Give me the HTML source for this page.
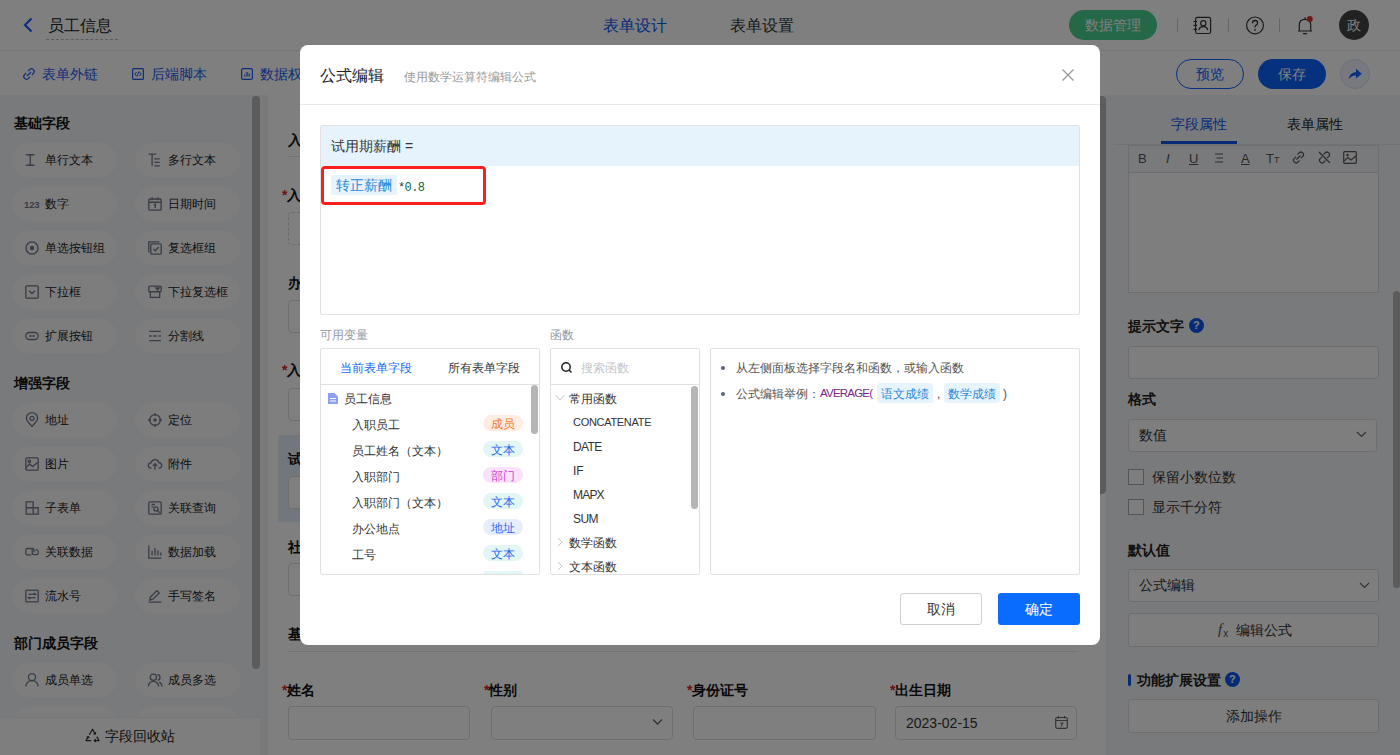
<!DOCTYPE html>
<html><head><meta charset="utf-8">
<style>
*{box-sizing:border-box;margin:0;padding:0}
html,body{width:1400px;height:755px;overflow:hidden;background:#fff;font-family:"Liberation Sans",sans-serif;color:#333;font-size:14px}
.a{position:absolute}
.t{position:absolute;white-space:nowrap;line-height:1}
svg{position:absolute;overflow:visible}
#hdr{left:0;top:0;width:1400px;height:51px;background:#fff;border-bottom:1px solid #ececec}
#tb{left:0;top:51px;width:1400px;height:44px;background:#fff}
#side{left:0;top:95px;width:268px;height:660px;background:#f3f4f7}
#canvas{left:268px;top:95px;width:838px;height:660px;background:#fff}
#right{left:1106px;top:95px;width:294px;height:660px;background:#f3f4f7}
#mask{left:0;top:0;width:1400px;height:755px;background:rgba(0,0,0,.5)}
#modal{left:300px;top:45px;width:800px;height:600px;background:#fff;border-radius:8px}
.pill{position:absolute;width:105px;height:34px;border-radius:17px;background:#fbfbfc}
.pill .t{font-size:12px;color:#222;top:11px}
.sh{position:absolute;font-size:14px;font-weight:bold;color:#111;line-height:1}
.ic{stroke:#737a8c;fill:none;stroke-width:1.15}
.sb{position:absolute;background:#b4b4b4;border-radius:4px}
</style></head><body>
<!-- header -->
<div id="hdr" class="a"></div>
<svg style="left:22px;top:17px" width="12" height="16" viewBox="0 0 12 16"><path d="M9.5 1.5 L3 8 L9.5 14.5" stroke="#1a5cf0" stroke-width="2.2" fill="none"/></svg>
<div class="t" style="left:48px;top:18px;font-size:16px;color:#222">员工信息</div>
<div class="a" style="left:46px;top:39px;width:72px;border-top:1px dashed #bbb"></div>
<div class="t" style="left:603px;top:18px;font-size:16px;color:#0a56ee">表单设计</div>
<div class="t" style="left:730px;top:18px;font-size:16px;color:#333">表单设置</div>
<div class="a" style="left:1069px;top:10px;width:88px;height:30px;border-radius:15px;background:#48d08e"></div>
<div class="t" style="left:1085px;top:18px;font-size:14px;color:#fff">数据管理</div>
<div class="a" style="left:1177px;top:18px;width:1px;height:14px;background:#ccc"></div>
<div class="a" style="left:1228px;top:18px;width:1px;height:14px;background:#ccc"></div>
<div class="a" style="left:1279px;top:18px;width:1px;height:14px;background:#ccc"></div>
<svg style="left:1193px;top:16px" width="19" height="19" viewBox="0 0 19 19"><rect x="2.6" y="1.3" width="15" height="16.2" rx="1.8" style="stroke:#333;stroke-width:1.2;fill:none"/><circle cx="10.3" cy="7.3" r="2.6" style="stroke:#333;stroke-width:1.2;fill:none"/><path d="M5.8 14.2 Q6.5 10.6 10.3 10.6 Q14.1 10.6 14.8 14.2" style="stroke:#333;stroke-width:1.2;fill:none"/><path d="M0.5 5.5H4M0.5 9.4H4M0.5 13.3H4" style="stroke:#333;stroke-width:1.2;fill:none"/></svg>
<svg style="left:1245px;top:15px" width="20" height="20" viewBox="0 0 20 20"><circle cx="10" cy="10.4" r="8.4" style="stroke:#333;stroke-width:1.2;fill:none"/><path d="M7.4 8.2 Q7.4 5.5 10 5.5 Q12.6 5.5 12.6 8 Q12.6 9.6 10.8 10.4 Q10 10.8 10 12.4" style="stroke:#333;stroke-width:1.3;fill:none"/><circle cx="10" cy="14.8" r="0.9" fill="#333"/></svg>
<svg style="left:1297px;top:16px" width="16" height="19" viewBox="0 0 16 19"><path d="M2.3 15 V9 Q2.3 3.3 8 3.3 Q13.7 3.3 13.7 9 V15 Z M1 15 H15 M6 17.6 H10 M8 1.2 V3.3" style="stroke:#333;stroke-width:1.2;fill:none;stroke-linejoin:round"/><circle cx="12.8" cy="3" r="3" fill="#e0312f"/></svg>
<div class="a" style="left:1339px;top:10px;width:30px;height:30px;border-radius:15px;background:#444"></div>
<div class="t" style="left:1347px;top:18px;font-size:14px;color:#fff">政</div>
<!-- toolbar -->
<div id="tb" class="a"></div>
<svg style="left:23px;top:68px" width="12" height="12" viewBox="0 0 12 12"><path d="M5 3.2 L6.8 1.4 Q8.6 -0.2 10.4 1.6 Q12.2 3.4 10.6 5.2 L8.8 7 M7 8.8 L5.2 10.6 Q3.4 12.2 1.6 10.4 Q-0.2 8.6 1.4 6.8 L3.2 5 M4 8 L8 4" style="stroke:#1a5cf0;stroke-width:1.2;fill:none"/></svg>
<div class="t" style="left:42px;top:67px;font-size:14px;color:#1a5cf0">表单外链</div>
<svg style="left:132px;top:68px" width="12" height="12" viewBox="0 0 12 12"><rect x="0.6" y="0.6" width="10.8" height="10.8" rx="1" style="stroke:#1a5cf0;stroke-width:1.2;fill:none"/><path d="M4.5 4 L2.8 6 L4.5 8 M7.5 4 L9.2 6 L7.5 8 M6.8 3.5 L5.2 8.5" style="stroke:#1a5cf0;stroke-width:1;fill:none"/></svg>
<div class="t" style="left:151px;top:67px;font-size:14px;color:#1a5cf0">后端脚本</div>
<svg style="left:241px;top:68px" width="12" height="12" viewBox="0 0 12 12"><rect x="0.6" y="0.6" width="10.8" height="10.8" rx="1.5" style="stroke:#1a5cf0;stroke-width:1.2;fill:none"/><path d="M3.8 8.5 V6.5 M6 8.5 V4 M8.2 8.5 V5.5" style="stroke:#1a5cf0;stroke-width:1.2;fill:none"/></svg>
<div class="t" style="left:260px;top:67px;font-size:14px;color:#1a5cf0">数据权限</div>
<div class="a" style="left:1176px;top:59px;width:68px;height:30px;border-radius:15px;border:1px solid #0a62ff;background:#fff"></div>
<div class="t" style="left:1196px;top:67px;font-size:14px;color:#0a62ff">预览</div>
<div class="a" style="left:1258px;top:59px;width:68px;height:30px;border-radius:15px;background:#0a62ff"></div>
<div class="t" style="left:1278px;top:67px;font-size:14px;color:#fff">保存</div>
<div class="a" style="left:1340px;top:59px;width:30px;height:30px;border-radius:15px;border:1px solid #d6e0f8;background:#eef3fe"></div>
<svg style="left:1347px;top:67px" width="16" height="14" viewBox="0 0 16 14"><path d="M1.5 12.5 Q2.5 5.5 9 5 V1.8 L14.8 6.8 L9 11.6 V8.5 Q4.5 8.3 1.5 12.5 Z" fill="#0a62ff"/></svg>
<!-- sidebar -->
<div id="side" class="a"></div>
<div class="sh" style="left:14px;top:116px">基础字段</div>
<div class="sh" style="left:14px;top:376px">增强字段</div>
<div class="sh" style="left:14px;top:636px">部门成员字段</div>
<div class="pill" style="left:12px;top:143px"><div class="t" style="left:33px">单行文本</div></div>
<svg style="left:25px;top:153px" width="14" height="14" viewBox="0 0 12 12" class="ic"><path d="M1 1.5H8M1 10.5H8M4.5 1.5V10.5"/></svg>
<div class="pill" style="left:135px;top:143px"><div class="t" style="left:33px">多行文本</div></div>
<svg style="left:148px;top:153px" width="14" height="14" viewBox="0 0 12 12" class="ic"><path d="M0.5 1H7M3.5 1V11M5.5 5H10M5.5 8H10M5.5 11H10"/></svg>
<div class="pill" style="left:12px;top:187px"><div class="t" style="left:33px">数字</div></div>
<div class="t" style="left:24px;top:200px;font-size:9.5px;font-weight:bold;color:#737a8c;letter-spacing:-0.1px">123</div>
<div class="pill" style="left:135px;top:187px"><div class="t" style="left:33px">日期时间</div></div>
<svg style="left:148px;top:197px" width="14" height="14" viewBox="0 0 12 12" class="ic"><rect x="0.7" y="1.7" width="10.6" height="9.6" rx="1"/><path d="M0.7 4.5H11.3M3.5 0.3V2.8M8.5 0.3V2.8M5 7L6.3 6V9.5"/></svg>
<div class="pill" style="left:12px;top:231px"><div class="t" style="left:33px">单选按钮组</div></div>
<svg style="left:25px;top:241px" width="14" height="14" viewBox="0 0 12 12" class="ic"><circle cx="6" cy="6" r="5.2"/><circle cx="6" cy="6" r="1.3" fill="#737a8c"/></svg>
<div class="pill" style="left:135px;top:231px"><div class="t" style="left:33px">复选框组</div></div>
<svg style="left:148px;top:241px" width="14" height="14" viewBox="0 0 12 12" class="ic"><path d="M0.7 9.8V0.7H9.8"/><rect x="2.4" y="2.4" width="8.9" height="8.9" rx="0.8"/><path d="M4.6 6.8L6.3 8.4L9.2 5.2"/></svg>
<div class="pill" style="left:12px;top:275px"><div class="t" style="left:33px">下拉框</div></div>
<svg style="left:25px;top:285px" width="14" height="14" viewBox="0 0 12 12" class="ic"><rect x="0.7" y="0.7" width="10.6" height="10.6" rx="1"/><path d="M3.5 5L6 7.3L8.5 5"/></svg>
<div class="pill" style="left:135px;top:275px"><div class="t" style="left:33px">下拉复选框</div></div>
<svg style="left:148px;top:285px" width="14" height="14" viewBox="0 0 12 12" class="ic"><rect x="0.7" y="1" width="10.6" height="4.8" rx="0.8"/><path d="M2 5.8V10.6H10V5.8"/><path d="M6.8 2.6H9.6L8.2 4.2Z" fill="#737a8c"/></svg>
<div class="pill" style="left:12px;top:319px"><div class="t" style="left:33px">扩展按钮</div></div>
<svg style="left:25px;top:329px" width="14" height="14" viewBox="0 0 12 12" class="ic"><rect x="0.7" y="3" width="10.6" height="6" rx="3"/><path d="M3.5 6H8.5"/></svg>
<div class="pill" style="left:135px;top:319px"><div class="t" style="left:33px">分割线</div></div>
<svg style="left:148px;top:329px" width="14" height="14" viewBox="0 0 12 12" class="ic"><path d="M1 2H11M1 10H11M1 6H3M4.5 6H7.5M9 6H11"/></svg>
<div class="pill" style="left:12px;top:403px"><div class="t" style="left:33px">地址</div></div>
<svg style="left:25px;top:413px" width="14" height="14" viewBox="0 0 12 12" class="ic"><path d="M6 11.5C3 8.5 1.2 6.5 1.2 4.5A4.8 4.8 0 0 1 10.8 4.5C10.8 6.5 9 8.5 6 11.5Z"/><circle cx="6" cy="4.6" r="1.7"/></svg>
<div class="pill" style="left:135px;top:403px"><div class="t" style="left:33px">定位</div></div>
<svg style="left:148px;top:413px" width="14" height="14" viewBox="0 0 12 12" class="ic"><circle cx="6" cy="6" r="4.6"/><circle cx="6" cy="6" r="0.9" fill="#737a8c"/><path d="M6 0V2.5M6 9.5V12M0 6H2.5M9.5 6H12"/></svg>
<div class="pill" style="left:12px;top:447px"><div class="t" style="left:33px">图片</div></div>
<svg style="left:25px;top:457px" width="14" height="14" viewBox="0 0 12 12" class="ic"><rect x="0.7" y="0.7" width="10.6" height="10.6" rx="1"/><path d="M0.9 9L4 6L6.5 8.2L11 4.5"/><circle cx="3.7" cy="3.7" r="1"/></svg>
<div class="pill" style="left:135px;top:447px"><div class="t" style="left:33px">附件</div></div>
<svg style="left:148px;top:457px" width="14" height="14" viewBox="0 0 12 12" class="ic"><path d="M3 9.5H2.5A2.3 2.3 0 0 1 2.6 4.9A3.5 3.5 0 0 1 9.4 4.9A2.3 2.3 0 0 1 9.5 9.5H9M6 11V6M4.2 7.6L6 5.8L7.8 7.6"/></svg>
<div class="pill" style="left:12px;top:491px"><div class="t" style="left:33px">子表单</div></div>
<svg style="left:25px;top:501px" width="14" height="14" viewBox="0 0 12 12" class="ic"><path d="M1 11.3V0.7H7V5.8H11.3V11.3ZM1 5.8H7V11.3"/></svg>
<div class="pill" style="left:135px;top:491px"><div class="t" style="left:33px">关联查询</div></div>
<svg style="left:148px;top:501px" width="14" height="14" viewBox="0 0 12 12" class="ic"><rect x="0.7" y="0.7" width="10.6" height="10.6" rx="1"/><path d="M3 3H6M3 5H4.5"/><circle cx="6.8" cy="6.8" r="1.8"/><path d="M8.2 8.2L10 10"/></svg>
<div class="pill" style="left:12px;top:535px"><div class="t" style="left:33px">关联数据</div></div>
<svg style="left:25px;top:545px" width="14" height="14" viewBox="0 0 12 12" class="ic"><path d="M5.5 8.5H2A1.4 1.4 0 0 1 0.7 7.1V4.4A1.4 1.4 0 0 1 2 3H6.5A1.4 1.4 0 0 1 7.8 4.4V6.2M6.2 3.5V6.8A1.4 1.4 0 0 0 7.5 8.2H10A1.4 1.4 0 0 0 11.3 6.8V5.6A1.4 1.4 0 0 0 10 4.2H9"/></svg>
<div class="pill" style="left:135px;top:535px"><div class="t" style="left:33px">数据加载</div></div>
<svg style="left:148px;top:545px" width="14" height="14" viewBox="0 0 12 12" class="ic"><path d="M0.7 0.5V11.3H11.5M3.5 9V5M6 9V2.5M8.5 9V4.5M11 9V6.5"/></svg>
<div class="pill" style="left:12px;top:579px"><div class="t" style="left:33px">流水号</div></div>
<svg style="left:25px;top:589px" width="14" height="14" viewBox="0 0 12 12" class="ic"><rect x="0.7" y="1" width="10.6" height="10" rx="1"/><path d="M3 4.6H9L7.6 3.4M9 7.4H3L4.4 8.6"/></svg>
<div class="pill" style="left:135px;top:579px"><div class="t" style="left:33px">手写签名</div></div>
<svg style="left:148px;top:589px" width="14" height="14" viewBox="0 0 12 12" class="ic"><path d="M1.5 9.5L2.2 6.8L7.6 1.4L9.6 3.4L4.2 8.8ZM0.5 11.3H11.5"/></svg>
<div class="pill" style="left:12px;top:663px"><div class="t" style="left:33px">成员单选</div></div>
<svg style="left:25px;top:673px" width="14" height="14" viewBox="0 0 12 12" class="ic"><circle cx="6" cy="3.6" r="3"/><path d="M0.8 11.5A5.2 5.2 0 0 1 11.2 11.5"/></svg>
<div class="pill" style="left:135px;top:663px"><div class="t" style="left:33px">成员多选</div></div>
<svg style="left:148px;top:673px" width="14" height="14" viewBox="0 0 12 12" class="ic"><circle cx="4.6" cy="3.6" r="2.7"/><path d="M0.3 11.5A4.3 4.3 0 0 1 9 11.5M8 1.2A2.6 2.6 0 0 1 8.3 6.3M9.6 7.8A4.3 4.3 0 0 1 12 11.5"/></svg>
<div class="pill" style="left:12px;top:707px"><div class="t" style="left:33px">部门单选</div></div>
<svg style="left:25px;top:717px" width="14" height="14" viewBox="0 0 12 12" class="ic"><rect x="4" y="0.7" width="4" height="3.5"/><path d="M6 4.2V7M2 9V7H10V9"/><rect x="0.7" y="9" width="3" height="2.5"/><rect x="8.3" y="9" width="3" height="2.5"/></svg>
<div class="pill" style="left:135px;top:707px"><div class="t" style="left:33px">部门多选</div></div>
<svg style="left:148px;top:717px" width="14" height="14" viewBox="0 0 12 12" class="ic"><rect x="4" y="0.7" width="4" height="3.5"/><path d="M6 4.2V7M2 9V7H10V9"/><rect x="0.7" y="9" width="3" height="2.5"/><rect x="8.3" y="9" width="3" height="2.5"/></svg>
<div class="sb" style="left:252px;top:96px;width:8px;height:573px;background:#b9b9b9"></div>
<div class="a" style="left:0;top:717px;width:260px;height:38px;background:#fdfdfe;border-top:1px solid #eceef2"></div>
<svg style="left:85px;top:728px" width="15" height="14" viewBox="0 0 15 14"><path d="M4.3 6.8L7.5 1.2L10.3 6.1M8.6 5.8L10.3 6.1L10.8 4.4M11.8 8.6L14 12.6H9.2M10.7 11.2L9.2 12.6L10.7 14M6.2 12.6H1L3.3 8.6M1.7 9.3L3.3 8.6L4.1 10.2" style="stroke:#333;stroke-width:1.2;fill:none;stroke-linejoin:round"/></svg>
<div class="t" style="left:105px;top:729px;font-size:14px;color:#222">字段回收站</div>
<!-- canvas -->
<div id="canvas" class="a"></div>
<div class="t" style="left:288px;top:133px;font-size:14px;font-weight:bold;color:#111">入职信息</div>
<div class="a" style="left:288px;top:156px;width:789px;height:1px;background:#e4e4e4"></div>
<div class="t" style="left:282px;top:188px;font-size:14px;font-weight:bold;color:#111"><span style="color:#e02020">*</span>入职员工</div>
<div class="a" style="left:288px;top:212px;width:182px;height:33px;border:1px dashed #d4d4d4;border-radius:4px"></div>
<div class="t" style="left:288px;top:276px;font-size:14px;font-weight:bold;color:#111">办公地点</div>
<div class="a" style="left:288px;top:300px;width:789px;height:33px;border:1px solid #dcdcdc;border-radius:4px"></div>
<div class="t" style="left:282px;top:363px;font-size:14px;font-weight:bold;color:#111"><span style="color:#e02020">*</span>入职部门</div>
<div class="a" style="left:288px;top:388px;width:182px;height:33px;border:1px solid #dcdcdc;border-radius:4px"></div>
<div class="a" style="left:278px;top:435px;width:808px;height:87px;background:#e5ecfa"></div>
<div class="t" style="left:288px;top:452px;font-size:14px;font-weight:bold;color:#111">试用期薪酬</div>
<div class="a" style="left:288px;top:476px;width:789px;height:33px;border:1px solid #dcdcdc;border-radius:4px;background:#fff"></div>
<div class="t" style="left:288px;top:540px;font-size:14px;font-weight:bold;color:#111">社保基数</div>
<div class="a" style="left:288px;top:563px;width:182px;height:33px;border:1px solid #dcdcdc;border-radius:4px"></div>
<div class="t" style="left:288px;top:627px;font-size:14px;font-weight:bold;color:#111">基本信息</div>
<div class="a" style="left:288px;top:651px;width:789px;height:1px;background:#e4e4e4"></div>
<div class="t" style="left:282px;top:683px;font-size:14px;font-weight:bold;color:#111"><span style="color:#e02020">*</span>姓名</div>
<div class="a" style="left:288px;top:706px;width:182px;height:34px;border:1px solid #dcdcdc;border-radius:4px"></div>
<div class="t" style="left:484px;top:683px;font-size:14px;font-weight:bold;color:#111"><span style="color:#e02020">*</span>性别</div>
<div class="a" style="left:491px;top:706px;width:182px;height:34px;border:1px solid #dcdcdc;border-radius:4px"></div>
<svg style="left:652px;top:718px" width="11" height="8" viewBox="0 0 11 8"><path d="M1 1.5L5.5 6L10 1.5" stroke="#666" stroke-width="1.3" fill="none"/></svg>
<div class="t" style="left:687px;top:683px;font-size:14px;font-weight:bold;color:#111"><span style="color:#e02020">*</span>身份证号</div>
<div class="a" style="left:693px;top:706px;width:183px;height:34px;border:1px solid #dcdcdc;border-radius:4px"></div>
<div class="t" style="left:890px;top:683px;font-size:14px;font-weight:bold;color:#111"><span style="color:#e02020">*</span>出生日期</div>
<div class="a" style="left:895px;top:706px;width:182px;height:34px;border:1px solid #dcdcdc;border-radius:4px"></div>
<div class="t" style="left:906px;top:716px;font-size:14px;color:#333">2023-02-15</div>
<svg style="left:1055px;top:716px" width="13" height="13" viewBox="0 0 13 13"><rect x="0.7" y="1.5" width="11.6" height="10.8" rx="1.5" stroke="#666" stroke-width="1.2" fill="none"/><path d="M0.7 4.5H12.3M3.5 0V2.5M9.5 0V2.5M5.3 7H7.8L6 10.5" stroke="#666" stroke-width="1.1" fill="none"/></svg>
<div class="sb" style="left:1100px;top:96px;width:6px;height:398px;background:#b9b9b9;border-radius:0 4px 4px 0"></div>
<!-- right panel -->
<div id="right" class="a"></div>
<div class="t" style="left:1171px;top:117px;font-size:14px;color:#0a56ee">字段属性</div>
<div class="t" style="left:1287px;top:117px;font-size:14px;color:#222">表单属性</div>
<div class="a" style="left:1114px;top:144px;width:286px;height:1px;background:#e2e4e8"></div>
<div class="a" style="left:1161px;top:141px;width:76px;height:3px;background:#0a56ee"></div>
<div class="a" style="left:1128px;top:145px;width:251px;height:148px;border:1px solid #dcdde2;background:#fdfdfe"></div>
<div class="a" style="left:1129px;top:146px;width:249px;height:27px;border-bottom:1px solid #dcdde2;background:#f3f4f7"></div>
<div class="t" style="left:1138px;top:152px;font-size:13px;color:#555">B</div>
<div class="t" style="left:1166px;top:152px;font-size:13px;color:#555;font-style:italic">I</div>
<div class="t" style="left:1189px;top:152px;font-size:13px;color:#555;text-decoration:underline">U</div>
<svg style="left:1214px;top:153px" width="10" height="10" viewBox="0 0 10 10"><path d="M1 1H9M2.5 5H9M1 9H9" stroke="#5a5a5a" stroke-width="1.1" fill="none"/></svg>
<div class="t" style="left:1241px;top:152px;font-size:13px;color:#555;text-decoration:underline">A</div>
<div class="t" style="left:1266px;top:152px;font-size:13px;color:#555">T<span style="font-size:9px">T</span></div>
<svg style="left:1292px;top:151px" width="13" height="13" viewBox="0 0 13 13"><path d="M5.5 3.5L7.3 1.7Q9 0.2 10.7 1.9Q12.4 3.6 10.9 5.3L9 7.2M7.5 9.5L5.7 11.3Q4 12.8 2.3 11.1Q0.6 9.4 2.1 7.7L4 5.8M4.5 8.5L8.5 4.5" stroke="#5a5a5a" stroke-width="1.2" fill="none"/></svg>
<svg style="left:1318px;top:151px" width="13" height="13" viewBox="0 0 13 13"><path d="M5.5 3.5L7.3 1.7Q9 0.2 10.7 1.9Q12.4 3.6 10.9 5.3L9 7.2M7.5 9.5L5.7 11.3Q4 12.8 2.3 11.1Q0.6 9.4 2.1 7.7L4 5.8M1 1L12 12" stroke="#5a5a5a" stroke-width="1.2" fill="none"/></svg>
<svg style="left:1343px;top:151px" width="14" height="13" viewBox="0 0 14 13"><rect x="0.7" y="0.7" width="12.6" height="11.6" rx="1" stroke="#5a5a5a" stroke-width="1.2" fill="none"/><path d="M1 10L5 6.5L8 9L13 5" stroke="#5a5a5a" stroke-width="1.2" fill="none"/><circle cx="4.5" cy="4" r="1.2" fill="#555"/></svg>
<div class="t" style="left:1128px;top:319px;font-size:14px;font-weight:bold;color:#222">提示文字</div>
<div class="a" style="left:1189px;top:318px;width:15px;height:15px;border-radius:8px;background:#0a56ee"></div>
<div class="t" style="left:1193px;top:320px;font-size:11px;font-weight:bold;color:#fff">?</div>
<div class="a" style="left:1128px;top:346px;width:251px;height:33px;border:1px solid #dcdde2;border-radius:3px;background:#fdfdfe"></div>
<div class="t" style="left:1128px;top:392px;font-size:14px;font-weight:bold;color:#222">格式</div>
<div class="a" style="left:1128px;top:419px;width:249px;height:33px;border:1px solid #dcdde2;border-radius:3px;background:#fdfdfe"></div>
<div class="t" style="left:1139px;top:428px;font-size:14px;color:#333">数值</div>
<svg style="left:1356px;top:431px" width="11" height="7" viewBox="0 0 11 7"><path d="M1 1L5.5 5.5L10 1" stroke="#666" stroke-width="1.2" fill="none"/></svg>
<div class="a" style="left:1128px;top:469px;width:16px;height:16px;border:1px solid #a9abb3;border-radius:0;background:#fdfdfe"></div>
<div class="t" style="left:1152px;top:470px;font-size:14px;color:#333">保留小数位数</div>
<div class="a" style="left:1128px;top:499px;width:16px;height:16px;border:1px solid #a9abb3;border-radius:0;background:#fdfdfe"></div>
<div class="t" style="left:1152px;top:500px;font-size:14px;color:#333">显示千分符</div>
<div class="t" style="left:1128px;top:543px;font-size:14px;font-weight:bold;color:#222">默认值</div>
<div class="a" style="left:1128px;top:569px;width:251px;height:33px;border:1px solid #dcdde2;border-radius:3px;background:#fdfdfe"></div>
<div class="t" style="left:1139px;top:578px;font-size:14px;color:#333">公式编辑</div>
<svg style="left:1359px;top:582px" width="11" height="7" viewBox="0 0 11 7"><path d="M1 1L5.5 5.5L10 1" stroke="#666" stroke-width="1.2" fill="none"/></svg>
<div class="a" style="left:1128px;top:613px;width:251px;height:34px;border:1px solid #dcdde2;border-radius:3px;background:#fdfdfe"></div>
<div class="t" style="left:1218px;top:622px;font-size:15px;color:#555;font-style:italic;font-family:'Liberation Serif',serif">f<span style="font-size:10px;font-style:normal;font-family:'Liberation Sans',sans-serif;position:relative;top:3px;left:1px">x</span></div>
<div class="t" style="left:1236px;top:623px;font-size:14px;color:#333">编辑公式</div>
<div class="a" style="left:1128px;top:674px;width:3px;height:12px;border-radius:1.5px;background:#0a56ee"></div>
<div class="t" style="left:1137px;top:673px;font-size:14px;font-weight:bold;color:#222">功能扩展设置</div>
<div class="a" style="left:1225px;top:672px;width:15px;height:15px;border-radius:8px;background:#0a56ee"></div>
<div class="t" style="left:1229px;top:674px;font-size:11px;font-weight:bold;color:#fff">?</div>
<div class="a" style="left:1128px;top:699px;width:251px;height:34px;border:1px solid #dcdde2;border-radius:3px;background:#fdfdfe"></div>
<div class="t" style="left:1226px;top:709px;font-size:14px;color:#333">添加操作</div>
<div class="sb" style="left:1393px;top:291px;width:7px;height:297px;background:#b9b9b9"></div>
<!-- mask -->
<div id="mask" class="a"></div>
<!-- modal -->
<div id="modal" class="a"></div>
<div class="t" style="left:320px;top:68px;font-size:16px;color:#222">公式编辑</div>
<div class="t" style="left:404px;top:71px;font-size:12px;color:#999">使用数学运算符编辑公式</div>
<svg style="left:1061px;top:68px" width="14" height="14" viewBox="0 0 14 14"><path d="M1.5 1.5L12.5 12.5M12.5 1.5L1.5 12.5" stroke="#999" stroke-width="1.3" fill="none"/></svg>
<div class="a" style="left:300px;top:104px;width:800px;height:1px;background:#e8e8e8"></div>
<div class="a" style="left:320px;top:125px;width:760px;height:190px;border:1px solid #e1e1e1;border-radius:2px"></div>
<div class="a" style="left:321px;top:126px;width:758px;height:40px;background:#e6f3fd"></div>
<div class="t" style="left:331px;top:139px;font-size:14px;color:#333">试用期薪酬 =</div>
<div class="a" style="left:321px;top:166px;width:165px;height:39px;border:3px solid #ff1e1e;border-radius:4px"></div>
<div class="a" style="left:331px;top:175px;width:66px;height:20px;background:#e8f4fd;border-radius:2px"></div>
<div class="t" style="left:336px;top:178px;font-size:14px;color:#2a88d8">转正薪酬</div>
<div class="t" style="left:398px;top:182px;font-size:12px;letter-spacing:-0.6px;color:#333;font-family:'Liberation Mono',monospace">*<span style="color:#164">0.8</span></div>
<div class="t" style="left:320px;top:329px;font-size:12px;color:#8f97a6">可用变量</div>
<div class="t" style="left:550px;top:329px;font-size:12px;color:#8f97a6">函数</div>
<!-- variables panel -->
<div class="a" style="left:320px;top:348px;width:220px;height:227px;border:1px solid #e1e1e1;border-radius:2px"></div>
<div class="a" style="left:321px;top:384px;width:218px;height:1px;background:#e1e1e1"></div>
<div class="t" style="left:340px;top:362px;font-size:12px;color:#1667f5">当前表单字段</div>
<div class="t" style="left:448px;top:362px;font-size:12px;color:#333">所有表单字段</div>
<svg style="left:328px;top:393px" width="10" height="11" viewBox="0 0 10 11"><path d="M0 0H6.5L10 3.5V11H0Z" fill="#8b9ff6"/><path d="M2 5.5H8M2 8H8" stroke="#fff" stroke-width="1"/></svg>
<div class="t" style="left:344px;top:393px;font-size:12px;color:#333">员工信息</div>
<div class="t" style="left:352px;top:419px;font-size:12px;color:#333">入职员工</div>
<div class="t" style="left:352px;top:445px;font-size:12px;color:#333">员工姓名（文本）</div>
<div class="t" style="left:352px;top:471px;font-size:12px;color:#333">入职部门</div>
<div class="t" style="left:352px;top:497px;font-size:12px;color:#333">入职部门（文本）</div>
<div class="t" style="left:352px;top:523px;font-size:12px;color:#333">办公地点</div>
<div class="t" style="left:352px;top:549px;font-size:12px;color:#333">工号</div>
<div class="a" style="left:483px;top:415px;width:40px;height:16px;border-radius:8px;background:#ffede3"></div>
<div class="t" style="left:491px;top:418px;font-size:12px;color:#f37b2c">成员</div>
<div class="a" style="left:483px;top:441px;width:40px;height:16px;border-radius:8px;background:#e3f6f6"></div>
<div class="t" style="left:491px;top:444px;font-size:12px;color:#2a6af0">文本</div>
<div class="a" style="left:483px;top:467px;width:40px;height:16px;border-radius:8px;background:#fbe2fb"></div>
<div class="t" style="left:491px;top:470px;font-size:12px;color:#d63bc9">部门</div>
<div class="a" style="left:483px;top:493px;width:40px;height:16px;border-radius:8px;background:#e3f6f6"></div>
<div class="t" style="left:491px;top:496px;font-size:12px;color:#2a6af0">文本</div>
<div class="a" style="left:483px;top:519px;width:40px;height:16px;border-radius:8px;background:#e6eefd"></div>
<div class="t" style="left:491px;top:522px;font-size:12px;color:#2a6af0">地址</div>
<div class="a" style="left:483px;top:545px;width:40px;height:16px;border-radius:8px;background:#e3f6f6"></div>
<div class="t" style="left:491px;top:548px;font-size:12px;color:#2a6af0">文本</div>
<div class="a" style="left:483px;top:571px;width:40px;height:3px;border-radius:8px 8px 0 0;background:#e3f6f6"></div>
<div class="sb" style="left:531px;top:385px;width:7px;height:49px;background:#b5b5b5"></div>
<!-- functions panel -->
<div class="a" style="left:550px;top:348px;width:150px;height:227px;border:1px solid #e1e1e1;border-radius:2px"></div>
<div class="a" style="left:551px;top:384px;width:148px;height:1px;background:#e1e1e1"></div>
<svg style="left:561px;top:362px" width="12" height="11" viewBox="0 0 12 11"><circle cx="5" cy="5" r="4.2" stroke="#222" stroke-width="1.5" fill="none"/><path d="M8 8L10.5 10.5" stroke="#222" stroke-width="1.5"/></svg>
<div class="t" style="left:581px;top:362px;font-size:12px;color:#c3c6cc">搜索函数</div>
<svg style="left:555px;top:394px" width="10" height="7" viewBox="0 0 10 7"><path d="M0.5 1L5 6L9.5 1" stroke="#c4c8d0" stroke-width="1" fill="none"/></svg>
<div class="t" style="left:569px;top:393px;font-size:12px;color:#333">常用函数</div>
<div class="t" style="left:573px;top:417px;font-size:11px;color:#333;letter-spacing:-0.3px">CONCATENATE</div>
<div class="t" style="left:573px;top:441px;font-size:12px;color:#333;letter-spacing:-0.6px">DATE</div>
<div class="t" style="left:573px;top:465px;font-size:12px;color:#333">IF</div>
<div class="t" style="left:573px;top:489px;font-size:12px;color:#333;letter-spacing:-0.8px">MAPX</div>
<div class="t" style="left:573px;top:513px;font-size:12px;color:#333;letter-spacing:-0.6px">SUM</div>
<svg style="left:557px;top:537px" width="6" height="10" viewBox="0 0 6 10"><path d="M1 1L5 5L1 9" stroke="#c4c8d0" stroke-width="1" fill="none"/></svg>
<div class="t" style="left:569px;top:537px;font-size:12px;color:#333">数学函数</div>
<svg style="left:557px;top:561px" width="6" height="10" viewBox="0 0 6 10"><path d="M1 1L5 5L1 9" stroke="#c4c8d0" stroke-width="1" fill="none"/></svg>
<div class="t" style="left:569px;top:561px;font-size:12px;color:#333">文本函数</div>
<div class="sb" style="left:691px;top:386px;width:7px;height:123px;background:#b5b5b5"></div>
<!-- desc panel -->
<div class="a" style="left:710px;top:348px;width:370px;height:227px;border:1px solid #e1e1e1;border-radius:2px"></div>
<div class="a" style="left:721px;top:366px;width:4px;height:4px;border-radius:2px;background:#5a6578"></div>
<div class="t" style="left:736px;top:362px;font-size:12px;color:#555">从左侧面板选择字段名和函数，或输入函数</div>
<div class="a" style="left:721px;top:392px;width:4px;height:4px;border-radius:2px;background:#5a6578"></div>
<div class="t" style="left:736px;top:388px;font-size:12px;color:#555">公式编辑举例：</div>
<div class="t" style="left:820px;top:388px;font-size:11.5px;color:#7a1f87;letter-spacing:-0.8px">AVERAGE(</div>
<div class="a" style="left:877px;top:383px;width:56px;height:20px;border-radius:3px;background:#e8f4fd"></div>
<div class="t" style="left:881px;top:388px;font-size:12px;color:#2a88d8">语文成绩</div>
<div class="t" style="left:937px;top:388px;font-size:12px;color:#555">,</div>
<div class="a" style="left:944px;top:383px;width:56px;height:20px;border-radius:3px;background:#e8f4fd"></div>
<div class="t" style="left:948px;top:388px;font-size:12px;color:#2a88d8">数学成绩</div>
<div class="t" style="left:1003px;top:388px;font-size:12px;color:#555">)</div>
<!-- footer buttons -->
<div class="a" style="left:900px;top:593px;width:82px;height:32px;border:1px solid #d0d0d0;border-radius:3px;background:#fff"></div>
<div class="t" style="left:927px;top:602px;font-size:14px;color:#333">取消</div>
<div class="a" style="left:998px;top:593px;width:82px;height:32px;border-radius:3px;background:#0a6cff"></div>
<div class="t" style="left:1025px;top:602px;font-size:14px;color:#fff">确定</div>
</body></html>
